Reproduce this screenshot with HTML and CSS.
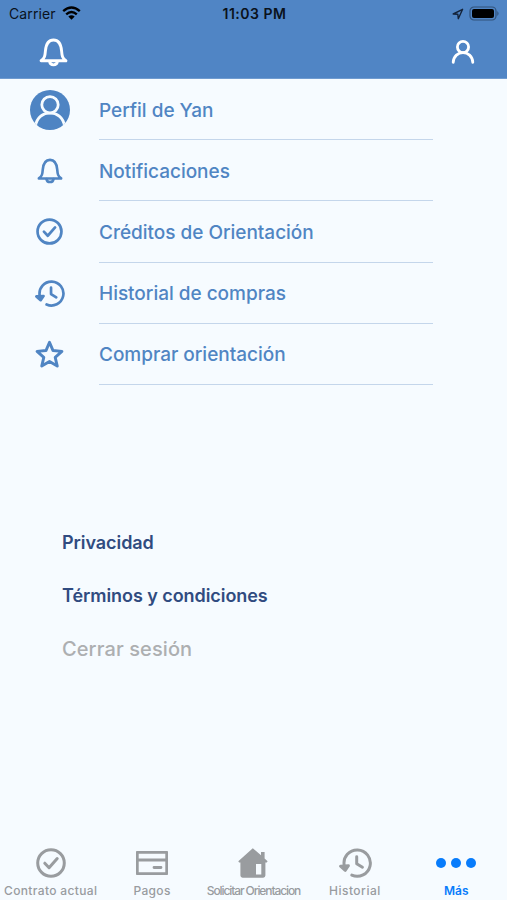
FILE: index.html
```html
<!DOCTYPE html>
<html lang="es">
<head>
    <meta charset="UTF-8">
    <meta name="viewport" content="width=device-width, initial-scale=1.0">
    <title>Más</title>
    <link rel="stylesheet" href="styles.css">
</head>
<body>

    <!-- Shared icons -->
    <svg class="icon-defs" width="0" height="0">
        <symbol id="icon-bell" viewBox="0 0 28 28">
            <path d="M2 22 C5.5 19.5 5.8 17.5 6.2 12.5 C6.8 5.6 9 2 14 2 C19 2 21.2 5.6 21.8 12.5 C22.2 17.5 22.5 19.5 26 22 Z"/>
            <path d="M10.2 22.6 C10.8 27 17.2 27 17.8 22.6"/>
        </symbol>
        <symbol id="icon-check" viewBox="0 0 28 28">
            <circle cx="14" cy="14" r="12.4"/>
            <path d="M8.2 14.2 L12.2 18.4 L19.8 9.8"/>
        </symbol>
        <symbol id="icon-history" viewBox="0 0 32 28">
            <path d="M5.8 16 A12.4 12.4 0 1 1 13 25.4"/>
            <path class="arrow-head" d="M2.4 17 L9.8 16.6 L6.8 20.9 Z"/>
            <path d="M17.6 8 V14.6 L23 18"/>
        </symbol>
    </svg>

    <div class="app">
        <header class="header">
            <div class="status-bar">
                <div class="carrier">
                    <span>Carrier</span>
                    <svg class="wifi" viewBox="0 0 19 14">
                        <path d="M1.2 5.2 Q9.5 -2.2 17.8 5.2"/>
                        <path d="M4.2 8.4 Q9.5 3.7 14.8 8.4"/>
                        <path class="wifi-dot" d="M6.3 10.5 Q9.5 8 12.7 10.5 L9.5 13.8 Z"/>
                    </svg>
                </div>
                <div class="clock">11:03 PM</div>
                <div class="indicators">
                    <svg class="location" viewBox="0 0 12 12">
                        <path d="M1.2 6 L10.6 1.3 L6.3 10.7 L5.8 6.2 Z"/>
                    </svg>
                    <svg class="battery" viewBox="0 0 31 15">
                        <rect class="battery-case" x="1" y="1" width="26" height="13" rx="4"/>
                        <rect class="battery-level" x="3" y="3" width="22" height="9" rx="2"/>
                        <path class="battery-tip" d="M28.3 5 Q30.8 7.5 28.3 10 Z"/>
                    </svg>
                </div>
            </div>
            <nav class="nav-bar">
                <svg class="icon nav-bell"><use href="#icon-bell"/></svg>
                <svg class="icon nav-user" viewBox="0 0 24 24">
                    <circle cx="12" cy="7" r="5.6"/>
                    <path d="M2.2 22.4 C2.7 9.4 21.3 9.4 21.8 22.4"/>
                </svg>
            </nav>
        </header>

        <main class="content">
            <ul class="menu">
                <li class="menu-item">
                    <span class="menu-icon">
                        <svg class="avatar" viewBox="0 0 40 40">
                            <clipPath id="avatarClip"><circle cx="20" cy="20" r="20"/></clipPath>
                            <g clip-path="url(#avatarClip)">
                                <rect class="avatar-bg" width="40" height="40"/>
                                <path d="M5.5 36 C8 18.5 32 18.5 34.5 36"/>
                                <circle class="avatar-head" cx="20" cy="14.8" r="8.2"/>
                            </g>
                        </svg>
                    </span>
                    <span class="menu-label">Perfil de Yan</span>
                </li>
                <li class="menu-item">
                    <span class="menu-icon"><svg class="icon menu-bell"><use href="#icon-bell"/></svg></span>
                    <span class="menu-label">Notificaciones</span>
                </li>
                <li class="menu-item">
                    <span class="menu-icon"><svg class="icon menu-check"><use href="#icon-check"/></svg></span>
                    <span class="menu-label">Créditos de Orientación</span>
                </li>
                <li class="menu-item">
                    <span class="menu-icon"><svg class="icon menu-history"><use href="#icon-history"/></svg></span>
                    <span class="menu-label">Historial de compras</span>
                </li>
                <li class="menu-item">
                    <span class="menu-icon">
                        <svg class="icon menu-star" viewBox="0 0 28 28">
                            <path d="M14 2.2 L17.4 10.2 L26 11 L19.5 16.7 L21.5 25.2 L14 20.7 L6.5 25.2 L8.5 16.7 L2 11 L10.6 10.2 Z"/>
                        </svg>
                    </span>
                    <span class="menu-label">Comprar orientación</span>
                </li>
            </ul>

            <div class="links">
                <a class="link">Privacidad</a>
                <a class="link">Términos y condiciones</a>
                <a class="logout">Cerrar sesión</a>
            </div>
        </main>

        <footer class="tab-bar">
            <div class="tab">
                <svg class="icon tab-check"><use href="#icon-check"/></svg>
                <span class="tab-label">Contrato actual</span>
            </div>
            <div class="tab">
                <svg class="icon tab-card" viewBox="0 0 32 24">
                    <rect x="1.3" y="1.3" width="29.4" height="21.4"/>
                    <path d="M1.3 9 H30.7 M18 16.5 H25"/>
                </svg>
                <span class="tab-label">Pagos</span>
            </div>
            <div class="tab">
                <svg class="tab-home" viewBox="0 0 30 30">
                    <path fill-rule="evenodd" d="M14.8 0.3 L23 7.2 V4 H26.6 V10.4 L29.6 13.2 L28.8 14.6 H27.4 V27.6 Q27.4 29.7 25.2 29.7 H4.6 Q2.4 29.7 2.4 27.6 V14.6 H1.1 L0.3 13.2 Z M18 16 V26.4 H23.3 V16 Z"/>
                </svg>
                <span class="tab-label tab-label-tight">Solicitar Orientacion</span>
            </div>
            <div class="tab">
                <svg class="icon tab-history"><use href="#icon-history"/></svg>
                <span class="tab-label tab-label-wide">Historial</span>
            </div>
            <div class="tab active">
                <span class="dots"><i></i><i></i><i></i></span>
                <span class="tab-label">Más</span>
            </div>
        </footer>
    </div>

</body>
</html>
```
FILE: styles.css
```css
* {
    box-sizing: border-box;
}

body {
    margin: 0;
    font-family: Inter, "Liberation Sans", sans-serif;
    background-color: #f6fbff;
}

.app {
    height: 900px;
    display: flex;
    flex-direction: column;
    overflow: hidden;
}

.icon-defs {
    position: absolute;
}

.icon {
    fill: none;
    stroke: currentColor;
    stroke-width: 2.8;
    stroke-linecap: round;
    stroke-linejoin: round;
}

.arrow-head {
    fill: currentColor;
}

/* Header */
.header {
    height: 79px;
    background-color: #5085c5;
    border-bottom: 1px solid #6f9bd0;
}

.status-bar {
    height: 27px;
    padding: 0 7px 0 9px;
    display: grid;
    grid-template-columns: 1fr auto 1fr;
    align-items: center;
    font-size: 14px;
    color: #0a121c;
}

.carrier {
    display: flex;
    align-items: center;
    gap: 6px;
    letter-spacing: 0.1px;
}

.wifi {
    width: 19px;
    height: 14px;
    margin-top: -2px;
    fill: none;
    stroke: #000;
    stroke-width: 2.4;
}

.wifi-dot {
    fill: #000;
    stroke: none;
}

.clock {
    font-weight: 600;
    letter-spacing: 0.5px;
}

.indicators {
    display: flex;
    justify-content: flex-end;
    align-items: center;
    gap: 5px;
}

.location {
    width: 12px;
    height: 12px;
    fill: none;
    stroke: #14233a;
    stroke-width: 1.4;
    stroke-linejoin: round;
}

.battery {
    width: 31px;
    height: 15px;
}

.battery-case {
    fill: none;
    stroke: #31527a;
    stroke-width: 1.2;
}

.battery-tip {
    fill: #31527a;
}

.nav-bar {
    height: 51px;
    padding: 0 32px 0 39px;
    display: flex;
    justify-content: space-between;
    align-items: center;
    color: #fff;
}

.nav-bell {
    width: 29px;
    height: 29px;
}

.nav-user {
    width: 24px;
    height: 24px;
    margin-top: -1px;
}

/* Menu */
.content {
    flex: 1;
}

.menu {
    list-style: none;
    margin: 0;
    padding: 0 74px 0 0;
}

.menu-item {
    display: flex;
    height: 61.2px;
    color: #5085c3;
}

.menu-icon {
    width: 99px;
    display: flex;
    align-items: center;
    justify-content: center;
}

.menu-icon svg {
    flex: none;
}

.avatar {
    width: 40px;
    height: 40px;
    fill: none;
    stroke: #f6fbff;
    stroke-width: 2.8;
}

.avatar-bg,
.avatar-head {
    fill: #4e84c3;
}

.avatar-bg {
    stroke: none;
}

.menu-bell {
    width: 26px;
    height: 26px;
}

.menu-check {
    width: 27px;
    height: 27px;
}

.menu-history {
    width: 31px;
    height: 27px;
}

.menu-star {
    width: 29px;
    height: 29px;
}

.menu-label {
    flex: 1;
    display: flex;
    align-items: center;
    padding-top: 2px;
    border-bottom: 1.5px solid #c4d6eb;
    font-size: 19px;
    font-weight: 500;
    letter-spacing: -0.02px;
}

/* Legal links */
.links {
    display: flex;
    flex-direction: column;
    align-items: flex-start;
    margin: 146px 0 0 62px;
    gap: 29px;
}

.link {
    font-size: 18px;
    line-height: 24px;
    font-weight: 600;
    letter-spacing: -0.06px;
    color: #304b80;
}

.logout {
    font-size: 20px;
    line-height: 24px;
    font-weight: 500;
    letter-spacing: 0.1px;
    color: #adafb1;
}

/* Tab bar */
.tab-bar {
    height: 57px;
    display: grid;
    grid-template-columns: repeat(5, 1fr);
    color: #999c9f;
}

.tab {
    display: grid;
    grid-template-rows: 40px 16px;
    align-content: start;
    justify-items: center;
    align-items: center;
}

.tab-check {
    width: 30px;
    height: 30px;
}

.tab-card {
    width: 32px;
    height: 24px;
}

.tab-home {
    width: 30px;
    height: 30px;
    fill: currentColor;
}

.tab-history {
    width: 34px;
    height: 30px;
}

.tab-label {
    font-size: 12px;
    line-height: 16px;
    font-weight: 500;
    letter-spacing: 0.35px;
    white-space: nowrap;
}

.tab-label-tight {
    letter-spacing: -1.1px;
}

.tab-label-wide {
    letter-spacing: 0.5px;
}

.active {
    color: #087cfb;
}

.active .tab-label {
    font-weight: 600;
    letter-spacing: 0;
}

.dots {
    display: flex;
    gap: 5px;
}

.dots i {
    width: 10px;
    height: 10px;
    border-radius: 50%;
    background-color: currentColor;
}
```
